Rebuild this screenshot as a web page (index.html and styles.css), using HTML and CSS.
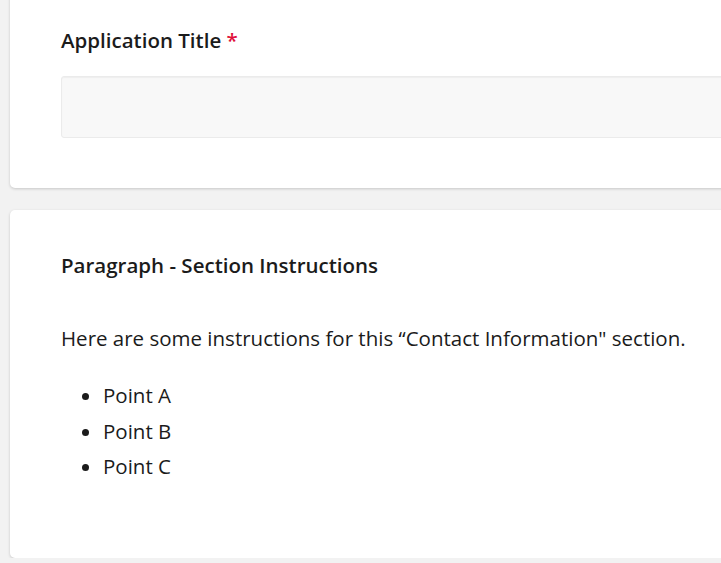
FILE: index.html
```html
<!DOCTYPE html>
<html>
<head>
<meta charset="utf-8">
<link rel="stylesheet" href="styles.css">
</head>
<body>
<div class="page">
  <section class="card card-field">
    <label class="field-label">Application Title <span class="req">*</span></label>
    <div class="input"></div>
  </section>
  <section class="card card-para">
    <h2 class="para-title">Paragraph - Section Instructions</h2>
    <p class="para-text">Here are some instructions for this “Contact Information" section.</p>
    <ul class="points">
      <li>Point A</li>
      <li>Point B</li>
      <li>Point C</li>
    </ul>
  </section>
</div>
</body>
</html>
```
FILE: styles.css
```css
html, body {
  margin: 0;
  padding: 0;
  background: #f2f2f2;
  overflow: hidden;
}
body {
  font-family: "Open Sans", "Noto Sans", sans-serif;
  color: #1b1b1b;
}
.page {
  width: 780px;
  padding-left: 10px;
  display: flex;
  flex-direction: column;
  gap: 22px;
  margin-top: -16px;
}
.card {
  background: #fff;
  border-radius: 5px;
  box-shadow: 0 1px 3px rgba(0,0,0,0.18);
  padding-left: 51px;
}
.card-field {
  padding-top: 42px;
  padding-bottom: 50px;
}
.field-label {
  display: block;
  font-size: 20.5px;
  font-weight: 600;
  line-height: 28px;
}
.req {
  color: #e0103a;
}
.input {
  margin-top: 22px;
  height: 60px;
  background: #f8f8f8;
  border: 1px solid #ebebeb;
  border-radius: 3px;
  box-shadow: inset 0 1px 1px rgba(0,0,0,0.04);
}
.card-para {
  padding-top: 41px;
  padding-bottom: 73px;
}
.para-title {
  margin: 0;
  font-size: 20.5px;
  font-weight: 600;
  line-height: 28px;
}
.para-text {
  margin: 45px 0 0;
  font-size: 20.5px;
  line-height: 28px;
}
.points {
  margin: 26px 0 0;
  padding-left: 42px;
  font-size: 20.5px;
  line-height: 35.5px;
}
```
